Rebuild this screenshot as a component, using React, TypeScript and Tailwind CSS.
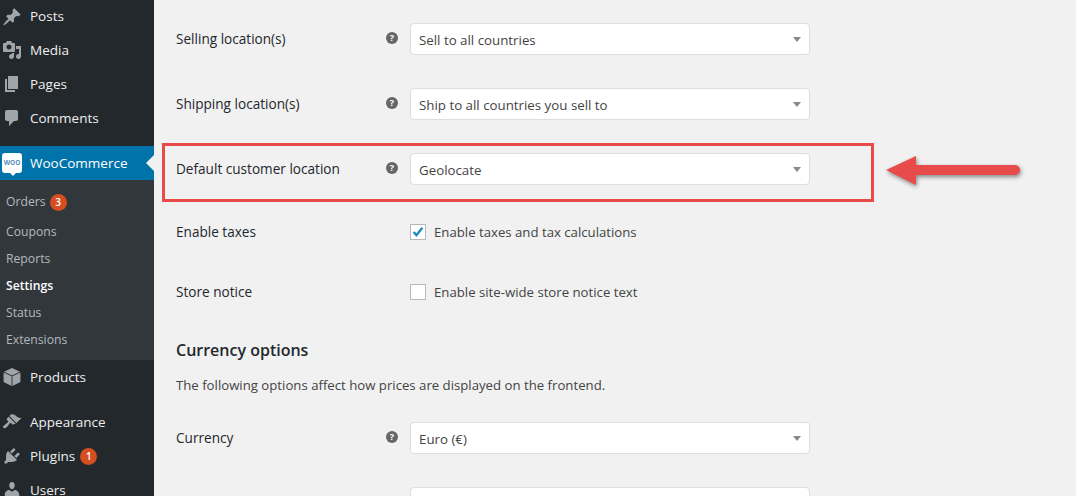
import type { ReactNode } from "react";

const ui = "font-['Open_Sans','Noto_Sans',sans-serif]";

const icons: Record<string, ReactNode> = {
  posts: <path d="M10.44 3.02l1.82-1.82 6.36 6.35-1.83 1.82c-1.05-.68-2.48-.57-3.41.36l-.75.75c-.92.93-1.04 2.35-.35 3.41l-1.83 1.82-2.41-2.41-2.8 2.79c-.42.42-3.38 2.71-3.8 2.29s1.86-3.39 2.28-3.81l2.79-2.79L4.1 9.36l1.83-1.82c1.05.69 2.48.57 3.4-.36l.75-.75c.93-.92 1.05-2.35.36-3.41z" />,
  media: <path d="M13 11V4c0-.55-.45-1-1-1h-1.67L9 1H5L3.67 3H2c-.55 0-1 .45-1 1v7c0 .55.45 1 1 1h10c.55 0 1-.45 1-1zM7 4.5c1.38 0 2.5 1.12 2.5 2.5S8.38 9.5 7 9.5 4.5 8.38 4.5 7 5.62 4.5 7 4.5zM14 6h5v10.5c0 1.38-1.12 2.5-2.5 2.5S14 17.88 14 16.5s1.12-2.5 2.5-2.5c.17 0 .34.02.5.05V9h-3V6zm-4 8.05V13h2v3.5c0 1.38-1.12 2.5-2.5 2.5S7 17.88 7 16.5 8.12 14 9.5 14c.17 0 .34.02.5.05z" />,
  pages: <path d="M6 15V2h10v13H6zm-1 1h8v2H3V5h2v11z" />,
  comments: <path d="M5 2h9c1.1 0 2 .9 2 2v7c0 1.1-.9 2-2 2h-2l-5 5v-5H5c-1.1 0-2-.9-2-2V4c0-1.1.9-2 2-2z" />,
  products: (
    <>
      <path d="M10 1l8 3.7-8 3.7-8-3.7z" />
      <path d="M1.6 5.6l8 3.7V19l-8-3.9zM18.4 5.6l-8 3.7V19l8-3.9z" />
    </>
  ),
  appearance: <path d="M14.48 11.06L7.41 3.99l1.5-1.5c.5-.56 2.3-.47 3.51.32 1.21.8 1.43 1.28 2.91 2.1 1.18.64 2.45 1.26 4.45.85zm-.71.71L6.7 4.7 4.93 6.47c-.39.39-.39 1.02 0 1.41l1.06 1.06c.39.39.39 1.03 0 1.42-.6.6-1.43 1.11-2.21 1.69-.35.26-.7.53-1.01.84C1.43 13.23.4 14.84 1.4 15.84c.99 1 2.6-.03 3.95-1.38.31-.31.58-.66.84-1.01.58-.78 1.09-1.61 1.69-2.21.39-.39 1.02-.39 1.41 0l1.06 1.06c.39.39 1.02.39 1.41 0z" />,
  plugins: <path d="M13.11 4.36L9.87 7.6 8 5.73l3.24-3.24c.35-.34 1.05-.2 1.56.32.52.51.66 1.21.31 1.55zm-8 1.77l.91-1.12 9.01 9.01-1.19.84c-.71.71-2.63 1.16-3.82 1.16H6.14L4.9 17.26c-.59.59-1.54.59-2.12 0-.59-.58-.59-1.53 0-2.12l1.24-1.24v-3.88c0-1.13.4-3.19 1.09-3.89zm7.26 3.97l3.24-3.24c.34-.35 1.04-.21 1.55.31.52.51.66 1.21.31 1.55l-3.24 3.25z" />,
  users: <path d="M10 9.25c-2.27 0-2.73-3.44-2.73-3.44C7 4.02 7.82 2 9.97 2c2.16 0 2.98 2.02 2.71 3.81 0 0-.41 3.44-2.68 3.44zm0 2.57L12.72 10c2.39 0 4.52 2.33 4.52 4.53v2.49s-3.65 1.13-7.24 1.13c-3.65 0-7.24-1.13-7.24-1.13v-2.49c0-2.25 1.94-4.48 4.47-4.48z" />,
};

function Badge({ n }: { n: number }) {
  return (
    <span className="flex h-[17px] w-[17px] items-center justify-center rounded-full bg-[#d54e21] text-[10px] font-semibold text-white">
      {n}
    </span>
  );
}

function MenuItem({ icon, label, badge, className = "h-[34px]" }: { icon: string; label: string; badge?: number; className?: string }) {
  return (
    <div className={`flex items-center gap-[5px] pl-[2px] text-[13.5px] text-[#eeeeee] ${className}`}>
      <svg viewBox="0 0 20 20" className="h-5 w-5 shrink-0 fill-[#a0a5aa]">
        {icons[icon]}
      </svg>
      <span className="ml-[3px]">{label}</span>
      {badge ? <Badge n={badge} /> : null}
    </div>
  );
}

function SubItem({ label, bold, badge, className = "h-[27px]" }: { label: string; bold?: boolean; badge?: number; className?: string }) {
  return (
    <div className={`flex items-center gap-[4px] pl-[6px] text-[12.2px] ${bold ? "font-semibold text-white" : "text-[#b4b9be]"} ${className}`}>
      {label}
      {badge ? <Badge n={badge} /> : null}
    </div>
  );
}

function Sidebar() {
  return (
    <aside className="h-[496px] w-[154px] shrink-0 overflow-hidden bg-[#23282d]">
      <MenuItem icon="posts" label="Posts" className="h-[33px]" />
      <MenuItem icon="media" label="Media" />
      <MenuItem icon="pages" label="Pages" />
      <MenuItem icon="comments" label="Comments" />
      <div className="relative mt-[11px] flex h-[34px] items-center bg-[#0073aa] pl-[2px] text-[13.5px] text-white">
        <div className="relative flex h-[20px] w-[20px] items-center justify-center rounded-[3px] bg-white text-[6.5px] font-bold uppercase leading-none text-[#5b8fc0]">
          woo
          <span className="absolute -bottom-[3px] left-[8px] h-0 w-0 border-x-[3px] border-t-[3px] border-x-transparent border-t-white" />
        </div>
        <span className="ml-2">WooCommerce</span>
        <span className="absolute right-0 top-[9px] h-0 w-0 border-y-[8px] border-r-[8px] border-y-transparent border-r-[#f1f1f1]" />
      </div>
      <div className="h-[180px] bg-[#32373c] pt-[7px]">
        <SubItem label="Orders" badge={3} className="h-[30px]" />
        <SubItem label="Coupons" className="h-[29px] pt-[1px]" />
        <SubItem label="Reports" />
        <SubItem label="Settings" bold />
        <SubItem label="Status" />
        <SubItem label="Extensions" />
      </div>
      <MenuItem icon="products" label="Products" />
      <MenuItem icon="appearance" label="Appearance" className="mt-[11px] h-[34px]" />
      <MenuItem icon="plugins" label="Plugins" badge={1} />
      <MenuItem icon="users" label="Users" />
    </aside>
  );
}

function Help() {
  return (
    <span className="mb-[3px] flex h-[12px] w-[12px] shrink-0 items-center justify-center rounded-full bg-[#666666] text-[9px] font-bold leading-none text-white">
      ?
    </span>
  );
}

function SelectBox({ value }: { value?: string }) {
  return (
    <div className="flex h-[32px] w-[400px] shrink-0 items-center justify-between rounded-[4px] border border-[#dddddd] bg-white pl-[8px] pr-[8px] text-[13.3px] text-[#444444]">
      <span className="pt-[4px]">{value}</span>
      <span className="h-0 w-0 border-x-[4px] border-t-[5px] border-x-transparent border-t-[#888888]" />
    </div>
  );
}

function SelectRow({ label, value, className }: { label: string; value?: string; className: string }) {
  return (
    <div className={`flex items-center ${className}`}>
      <div className="w-[210px] text-[13.6px] font-medium text-[#23282d]">{label}</div>
      <Help />
      <div className="w-[12px]" />
      <SelectBox value={value} />
    </div>
  );
}

function CheckRow({ label, text, checked, className }: { label: string; text: string; checked?: boolean; className: string }) {
  return (
    <div className={`flex items-center ${className}`}>
      <div className="w-[234px] text-[13.6px] font-medium text-[#23282d]">{label}</div>
      <span className="flex h-[16px] w-[16px] items-center justify-center border border-[#b4b9be] bg-white">
        {checked ? (
          <svg viewBox="0 0 16 16" className="h-[14px] w-[14px]">
            <path d="M3 8l3.2 3.6L13 3.2" fill="none" stroke="#1e8cbe" strokeWidth="2.8" />
          </svg>
        ) : null}
      </span>
      <span className="ml-2 pt-[2px] text-[13.2px] text-[#444444]">{text}</span>
    </div>
  );
}

function Settings() {
  return (
    <main className="min-w-0 flex-1 pl-[22px] pt-[23px]">
      <SelectRow label="Selling location(s)" value="Sell to all countries" className="h-[32px]" />
      <SelectRow label="Shipping location(s)" value="Ship to all countries you sell to" className="mt-[33px] h-[32px]" />
      <SelectRow label="Default customer location" value="Geolocate" className="mt-[33px] h-[32px]" />
      <CheckRow label="Enable taxes" text="Enable taxes and tax calculations" checked className="mt-[39px] h-[16px]" />
      <CheckRow label="Store notice" text="Enable site-wide store notice text" className="mt-[44px] h-[16px]" />
      <h2 className="mt-[38px] text-[16px] font-semibold leading-[24px] text-[#23282d]">Currency options</h2>
      <p className="mt-[12px] text-[13.2px] leading-[22px] text-[#444444]">The following options affect how prices are displayed on the frontend.</p>
      <SelectRow label="Currency" value="Euro (€)" className="mt-[26px] h-[32px]" />
      <SelectRow label="" className="mt-[33px] h-[32px] [&>span]:invisible" />
    </main>
  );
}

export default function App() {
  return (
    <div className={`relative flex h-[496px] w-[1076px] overflow-hidden bg-[#f1f1f1] ${ui}`}>
      <Sidebar />
      <Settings />
      {/* annotation laid over the screenshot */}
      <div className="absolute left-[162px] top-[143px] h-[59px] w-[712px] border-[3px] border-[#e84c4a]" />
      <svg viewBox="0 0 140 36" className="absolute left-[884px] top-[153px] h-[36px] w-[140px] drop-shadow-[1px_2px_2px_rgba(0,0,0,0.45)]">
        <path d="M2 17L32 3v9h99a5 5 0 0 1 0 10H32v10z" fill="#e84c4a" />
      </svg>
    </div>
  );
}
